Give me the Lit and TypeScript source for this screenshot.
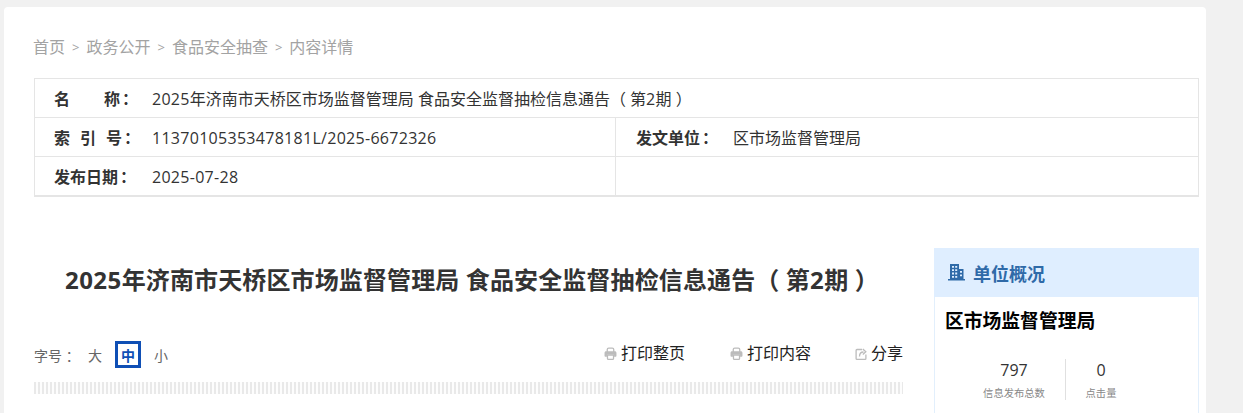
import { LitElement, html, css, svg } from "lit";
import { customElement } from "lit/decorators.js";

const printer = svg`<path d="M3 5V2.300C3 1.500 3.500 1 4.300 1h3.400C8.500 1 9 1.500 9 2.300V5" fill="none" stroke="#bcbcbc" stroke-width="1.200"/><path d="M2 4h8c.9 0 1.500.6 1.500 1.500V8c0 .6-.4 1-1 1H9.300V7.200H2.700V9H1.500c-.6 0-1-.4-1-1V5.500C.5 4.600 1.100 4 2 4z" fill="#bcbcbc"/><path d="M3.200 7.500h5.600v3c0 .5-.4.9-.9.9H4.100c-.5 0-.9-.4-.9-.9z" fill="none" stroke="#bcbcbc" stroke-width="1.200"/>`;

const n = (s: string) => html`<span class="n">${s}</span>`;
const colon = html`<span class="colon">：</span>`;

@customElement("app-root")
export class AppRoot extends LitElement {
  static styles = css`
    :host { display: block; height: 413px; overflow: hidden; background: #f1f1f1; font-family: "Open Sans", "Noto Sans CJK SC", sans-serif; }
    .card { margin: 7px 37px 0 4px; padding: 30px 7px 0 30px; height: 406px; box-sizing: border-box; background: #fff; border-radius: 4px 4px 0 0; overflow: hidden; }
    .n { letter-spacing: .018em; }
    .crumb { display: flex; align-items: center; height: 21px; margin-left: -1px; font-size: 16px; color: #a3a3a3; line-height: 21px; }
    .crumb span.sep { margin: 0 7px; font-size: 13px; }
    .info { margin-top: 20px; border: 1px solid #e5e5e5; border-bottom-width: 2px; font-size: 16px; color: #333; }
    .row { display: grid; grid-template-columns: 580px 1fr; height: 38px; border-bottom: 1px solid #e5e5e5; }
    .row:last-child { border-bottom: 0; }
    .row.full { grid-template-columns: 1fr; }
    .cell { display: flex; align-items: center; padding: 2px 0 0 19px; box-sizing: border-box; line-height: 36px; white-space: nowrap; }
    .cell + .cell { border-left: 1px solid #e5e5e5; padding-left: 20px; }
    .cell + .cell .k { width: 97px; }
    .k { width: 98px; font-weight: 700; white-space: pre; }
    .colon { margin-left: 2px; }
    .sp { display: inline-block; width: 10px; }
    .sp.wide { width: 34px; }
    .main { display: grid; grid-template-columns: 869px 265px; gap: 31px; margin-top: 51px; }
    h1 { margin: 15px 0 0; padding: 0 0 0 31px; font-size: 24px; line-height: 34px; font-weight: 700; color: #333; white-space: pre; height: 34px; letter-spacing: .13px; }
    .tools { display: flex; align-items: flex-start; margin-top: 42px; height: 29px; }
    .size { display: flex; align-items: center; margin-top: 2px; font-size: 14px; color: #666; }
    .size b { font-weight: 400; width: 54px; white-space: pre; }
    .size i { font-style: normal; width: 26px; height: 27px; box-sizing: border-box; display: flex; align-items: center; justify-content: center; margin-right: 13px; }
    .size i.on { border: 3px solid #0f4fb5; color: #0f4fb5; font-weight: 700; }
    .size i.s { width: 14px; }
    .acts { margin-left: auto; display: flex; align-items: center; height: 26px; font-size: 16px; color: #222; }
    .act { display: flex; align-items: center; gap: 4px; margin-left: 45px; white-space: nowrap; }
    .act:last-child { margin-left: 44px; }
    .act svg { width: 13px; height: 13px; flex: none; margin-top: 3px; }
    .act:last-child svg { width: 12px; height: 12px; }
    .stripe { margin-top: 14px; height: 12px; background: repeating-linear-gradient(90deg, #e9e9e9 0 2px, #fdfdfd 2px 4px); }
    .side { border: 1px solid #e2effc; border-top: 0; height: 200px; }
    .head { margin: 0 -1px; height: 49px; background: #dfeeff; display: flex; align-items: center; padding-left: 14px; gap: 8px; font-size: 18px; font-weight: 700; color: #2f6aa8; }
    .head svg { width: 17px; height: 17px; }
    .org { padding-left: 10px; margin-top: 11px; font-size: 18.8px; line-height: 27px; font-weight: 700; color: #000; }
    .stats { display: grid; grid-template-columns: 130px 1fr; margin-top: 24px; }
    .st { text-align: center; height: 41px; padding-left: 28px; box-sizing: border-box; }
    .st + .st { border-left: 1px solid #e0e0e0; padding: 0 62px 0 0; }
    .st strong { display: block; font-weight: 400; font-size: 16px; line-height: 22px; color: #333; }
    .st small { display: block; margin-top: 1px; font-size: 10.3px; line-height: 22px; color: #888; }
  `;
  render() {
    return html`<div class="card">
      <div class="crumb"><span>首页</span><span class="sep">&gt;</span><span>政务公开</span><span class="sep">&gt;</span><span>食品安全抽查</span><span class="sep">&gt;</span><span>内容详情</span></div>
      <div class="info">
        <div class="row full"><div class="cell"><span class="k">名<span class="sp wide"></span>称${colon}</span><span>${n("2025")}年济南市天桥区市场监督管理局 食品安全监督抽检信息通告（ 第${n("2")}期 ）</span></div></div>
        <div class="row"><div class="cell"><span class="k">索<span class="sp"></span>引<span class="sp"></span>号${colon}</span><span>${n("11370105353478181L/2025-6672326")}</span></div><div class="cell"><span class="k">发文单位${colon}</span><span>区市场监督管理局</span></div></div>
        <div class="row"><div class="cell"><span class="k">发布日期${colon}</span><span>${n("2025-07-28")}</span></div><div class="cell"></div></div>
      </div>
      <div class="main">
        <div>
          <h1>${n("2025")}年济南市天桥区市场监督管理局 食品安全监督抽检信息通告（ 第${n("2")}期 ）</h1>
          <div class="tools">
            <div class="size"><b>字号 ：</b><i class="s">大</i><i class="on">中</i><i class="s">小</i></div>
            <div class="acts">
              <span class="act"><svg viewBox="0 0 12 12">${printer}</svg>打印整页</span>
              <span class="act"><svg viewBox="0 0 12 12">${printer}</svg>打印内容</span>
              <span class="act"><svg viewBox="0 0 12 12"><path d="M7 1.500H2c-.5 0-.9.4-.9.9v8c0 .5.4.9.9.9h8c.5 0 .9-.4.9-.9V6.500" fill="none" stroke="#bcbcbc" stroke-width="1.300"/><path d="M4.500 8.500C4.500 5.800 6 4 8.500 4M7.800 1l3 2.800-3 2.600" fill="none" stroke="#bcbcbc" stroke-width="1.300"/></svg>分享</span>
            </div>
          </div>
          <div class="stripe"></div>
        </div>
        <aside class="side">
          <div class="head"><svg viewBox="0 0 17 17"><path fill-rule="evenodd" fill="#2f6aa8" d="M2 0h9v5h4.500v10h1.500v1.500H0V15h2zM4 2v1.800h2V2zm3.200 0v1.800h2V2zM4 5.300v1.800h2V5.300zm3.200 0v1.800h2V5.300zM4 8.600v1.800h2V8.600zm3.200 0v1.800h2V8.600zM4 12v1.800h2V12zm3.200 0v1.800h2V12zM12 7v1.800h2V7zm0 3.500v1.800h2v-1.800z"/></svg>单位概况</div>
          <div class="org">区市场监督管理局</div>
          <div class="stats"><div class="st"><strong>797</strong><small>信息发布总数</small></div><div class="st"><strong>0</strong><small>点击量</small></div></div>
        </aside>
      </div>
    </div>`;
  }
}
